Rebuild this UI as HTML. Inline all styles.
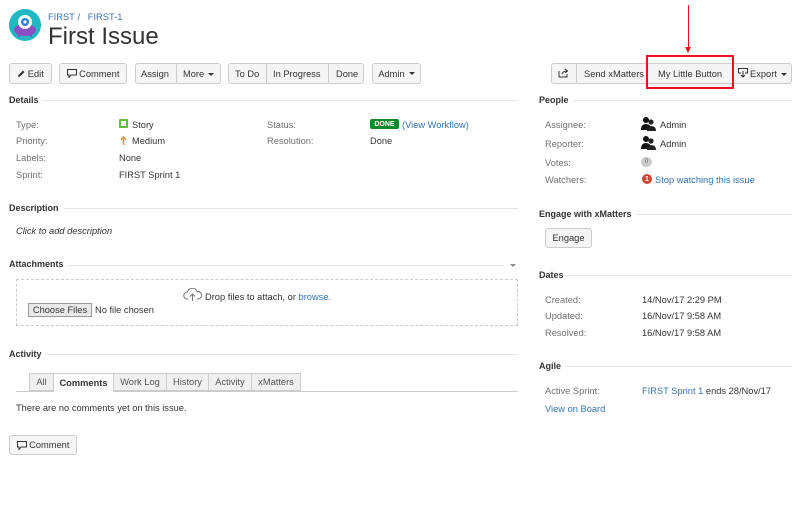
<!DOCTYPE html>
<html><head><meta charset="utf-8">
<style>
*{margin:0;padding:0;box-sizing:border-box}
body{width:800px;height:520px;background:#fff;font-family:"Liberation Sans",sans-serif;color:#333;position:relative;overflow:hidden;font-size:9.3px}
.t{position:absolute;white-space:nowrap;font-size:9.3px;line-height:12px;margin-top:1px}
.l{color:#707070}
.a{color:#3572b0}
.h{position:absolute;font-weight:bold;font-size:9px;line-height:12px;color:#333}
.rule{position:absolute;height:1px;background:#e6e6e6}
.btn{position:absolute;top:63px;height:21px;border:1px solid #ccc;background:#f5f5f5;border-radius:3px;font-size:9.3px;color:#333;display:flex;align-items:center;justify-content:center;white-space:nowrap}
.bt{top:67px}
.sep{position:absolute;top:64px;width:1px;height:19px;background:#ccc}
.car{display:inline-block;width:0;height:0;border-left:3px solid transparent;border-right:3px solid transparent;border-top:3px solid #333;vertical-align:middle;margin-left:4px}
.tab{position:absolute;top:373px;height:18px;border:1px solid #ccc;background:#f0f0f0;font-size:9.3px;display:flex;align-items:center;justify-content:center;color:#555}
</style></head><body>
<svg style="position:absolute;left:9px;top:9px" width="32" height="32" viewBox="0 0 32 32">
<circle cx="16" cy="16" r="16" fill="#1fb8c4"/>
<ellipse cx="16" cy="21" rx="11" ry="6" fill="#8a4fc0"/>
<rect x="9" y="25" width="2" height="3" fill="#8a4fc0"/><rect x="21" y="25" width="2" height="3" fill="#8a4fc0"/>
<circle cx="16" cy="13" r="7" fill="#fff"/><circle cx="16" cy="13" r="4" fill="#2d7fd0"/><circle cx="16" cy="13" r="1.6" fill="#fff"/>
</svg>
<div class="t a" style="left:48px;top:10px">FIRST&nbsp;/&nbsp;&nbsp; FIRST-1</div>
<div class="t" style="left:48px;top:22px;font-size:24px;line-height:28px">First Issue</div>

<div class="btn" style="left:9px;width:43px"><svg width="8" height="8" viewBox="0 0 8 8"><path d="M1 7 L1.5 5 L6 0.5 L7.5 2 L3 6.5Z" fill="#333"/></svg>&nbsp;Edit</div>
<div class="btn" style="left:59px;width:68px"><svg width="10" height="9" viewBox="0 0 10 9"><path d="M0.5 0.5H9.5V6H4L2 8.5V6H0.5Z" fill="none" stroke="#333"/></svg>&nbsp;Comment</div>
<div class="btn" style="left:135px;width:86px"></div><div class="t bt" style="left:141px">Assign</div><div class="sep" style="left:176px"></div><div class="t bt" style="left:183px">More<span class="car"></span></div>
<div class="btn" style="left:228px;width:136px"></div><div class="t bt" style="left:235px">To Do</div><div class="sep" style="left:266px"></div><div class="t bt" style="left:273px">In Progress</div><div class="sep" style="left:328px"></div><div class="t bt" style="left:336px">Done</div>
<div class="btn" style="left:372px;width:49px">Admin<span class="car"></span></div>

<div class="btn" style="left:551px;width:241px"></div>
<svg style="position:absolute;left:558px;top:68px" width="11" height="10" viewBox="0 0 11 10"><path d="M1 3V9H9V6" fill="none" stroke="#333"/><path d="M4 6 Q5 3 8.5 3 M7 1 L9.5 3 L7 5" fill="none" stroke="#333"/></svg>
<div class="sep" style="left:576px"></div><div class="t bt" style="left:584px">Send xMatters</div>
<div class="sep" style="left:647px"></div><div class="t bt" style="left:658px">My Little Button</div>
<div class="sep" style="left:732px"></div>
<svg style="position:absolute;left:738px;top:68px" width="10" height="10" viewBox="0 0 10 10"><path d="M3 5H0.5V0.5H9.5V5H7" fill="none" stroke="#333"/><path d="M5 3V9 M3 7L5 9L7 7" fill="none" stroke="#333"/></svg>
<div class="t bt" style="left:750px">Export<span class="car"></span></div>
<div style="position:absolute;left:646px;top:55px;width:88px;height:34px;border:2px solid #e8141c"></div>
<div style="position:absolute;left:688px;top:5px;width:1px;height:44px;background:#e8141c"></div>
<div style="position:absolute;left:685px;top:47px;width:0;height:0;border-left:3px solid transparent;border-right:3px solid transparent;border-top:6px solid #e8141c"></div>

<div class="h" style="left:9px;top:94px">Details</div><div class="rule" style="left:42px;top:100px;width:476px"></div>
<div class="t l" style="left:16px;top:118px">Type:</div>
<div style="position:absolute;left:119px;top:119px;width:9px;height:9px;background:#63ba3c;border-radius:1px"><div style="position:absolute;left:2px;top:2px;width:5px;height:5px;background:#fff"></div></div>
<div class="t" style="left:132px;top:118px">Story</div>
<div class="t l" style="left:16px;top:134px">Priority:</div>
<svg style="position:absolute;left:120px;top:136px" width="7" height="9" viewBox="0 0 7 9"><path d="M3.5 9V1 M0.8 3.8L3.5 1L6.2 3.8" fill="none" stroke="#f79232" stroke-width="1.6"/></svg>
<div class="t" style="left:132px;top:134px">Medium</div>
<div class="t l" style="left:16px;top:151px">Labels:</div><div class="t" style="left:119px;top:151px">None</div>
<div class="t l" style="left:16px;top:168px">Sprint:</div><div class="t" style="left:119px;top:168px">FIRST Sprint 1</div>
<div class="t l" style="left:267px;top:118px">Status:</div>
<div style="position:absolute;left:370px;top:119px;width:29px;height:10px;background:#14892c;border-radius:2px;color:#fff;font-size:7px;font-weight:bold;display:flex;align-items:center;justify-content:center">DONE</div>
<div class="t a" style="left:402px;top:118px">(View Workflow)</div>
<div class="t l" style="left:267px;top:134px">Resolution:</div><div class="t" style="left:370px;top:134px">Done</div>

<div class="h" style="left:9px;top:202px">Description</div><div class="rule" style="left:64px;top:208px;width:454px"></div>
<div class="t" style="left:16px;top:224px;font-style:italic">Click to add description</div>

<div class="h" style="left:9px;top:258px">Attachments</div><div class="rule" style="left:67px;top:265px;width:437px"></div>
<div style="position:absolute;left:510px;top:264px;border-left:3px solid transparent;border-right:3px solid transparent;border-top:3px solid #888"></div>
<div style="position:absolute;left:16px;top:279px;width:502px;height:47px;border:1px dashed #ccc"></div>
<svg style="position:absolute;left:183px;top:288px" width="20" height="14" viewBox="0 0 20 14"><path d="M5 11H4A3.5 3.5 0 0 1 4.5 4 5 5 0 0 1 14 3.5 3.7 3.7 0 0 1 15.5 11H14" fill="none" stroke="#777"/><path d="M9.5 13V6 M7 8.5L9.5 6L12 8.5" fill="none" stroke="#777"/></svg>
<div class="t" style="left:205px;top:290px">Drop files to attach, or <span class="a">browse.</span></div>
<div style="position:absolute;left:28px;top:303px;width:64px;height:14px;border:1px solid #999;background:#e9e9e9;font-size:9.3px;display:flex;align-items:center;justify-content:center">Choose Files</div>
<div class="t" style="left:95px;top:303px">No file chosen</div>

<div class="h" style="left:9px;top:348px">Activity</div><div class="rule" style="left:44px;top:354px;width:474px"></div>
<div class="rule" style="left:16px;top:391px;width:502px;background:#ccc"></div>
<div class="tab" style="left:29px;width:25px">All</div>
<div class="tab" style="left:53px;width:61px;background:#fff;border-bottom-color:#fff;color:#333;font-weight:bold;height:19px">Comments</div>
<div class="tab" style="left:113px;width:54px">Work Log</div>
<div class="tab" style="left:166px;width:43px">History</div>
<div class="tab" style="left:208px;width:44px">Activity</div>
<div class="tab" style="left:251px;width:50px">xMatters</div>
<div class="t" style="left:16px;top:401px">There are no comments yet on this issue.</div>
<div style="position:absolute;left:9px;top:435px;width:68px;height:20px;border:1px solid #ccc;background:#f5f5f5;border-radius:3px;font-size:9.3px;display:flex;align-items:center;justify-content:center"><svg width="10" height="9" viewBox="0 0 10 9"><path d="M0.5 0.5H9.5V6H4L2 8.5V6H0.5Z" fill="none" stroke="#333"/></svg>&nbsp;Comment</div>

<div class="h" style="left:539px;top:94px">People</div><div class="rule" style="left:573px;top:100px;width:219px"></div>
<div class="t l" style="left:545px;top:118px">Assignee:</div>
<svg style="position:absolute;left:641px;top:116px" width="16" height="15" viewBox="0 0 16 15"><circle cx="5" cy="4" r="3" fill="#111"/><path d="M0 14Q0 8 5 8Q10 8 10 14Z" fill="#111"/><circle cx="10" cy="6" r="2.6" fill="#222"/><path d="M6 15Q6 10 10 10Q15 10 15 15Z" fill="#222"/></svg>
<div class="t" style="left:660px;top:118px">Admin</div>
<div class="t l" style="left:545px;top:137px">Reporter:</div>
<svg style="position:absolute;left:641px;top:135px" width="16" height="15" viewBox="0 0 16 15"><circle cx="5" cy="4" r="3" fill="#111"/><path d="M0 14Q0 8 5 8Q10 8 10 14Z" fill="#111"/><circle cx="10" cy="6" r="2.6" fill="#222"/><path d="M6 15Q6 10 10 10Q15 10 15 15Z" fill="#222"/></svg>
<div class="t" style="left:660px;top:137px">Admin</div>
<div class="t l" style="left:545px;top:156px">Votes:</div>
<div style="position:absolute;left:641px;top:157px;width:11px;height:10px;border-radius:5px;background:#ccc;color:#666;font-size:6px;display:flex;align-items:center;justify-content:center">0</div>
<div class="t l" style="left:545px;top:173px">Watchers:</div>
<div style="position:absolute;left:642px;top:174px;width:10px;height:10px;border-radius:5px;background:#d04437;color:#fff;font-size:7px;font-weight:bold;display:flex;align-items:center;justify-content:center">1</div>
<div class="t a" style="left:655px;top:173px">Stop watching this issue</div>

<div class="h" style="left:539px;top:208px">Engage with xMatters</div><div class="rule" style="left:636px;top:214px;width:156px"></div>
<div style="position:absolute;left:545px;top:228px;width:47px;height:20px;border:1px solid #ccc;background:#f5f5f5;border-radius:3px;font-size:9.3px;display:flex;align-items:center;justify-content:center">Engage</div>

<div class="h" style="left:539px;top:269px">Dates</div><div class="rule" style="left:567px;top:275px;width:225px"></div>
<div class="t l" style="left:545px;top:293px">Created:</div><div class="t" style="left:642px;top:293px">14/Nov/17 2:29 PM</div>
<div class="t l" style="left:545px;top:309px">Updated:</div><div class="t" style="left:642px;top:309px">16/Nov/17 9:58 AM</div>
<div class="t l" style="left:545px;top:326px">Resolved:</div><div class="t" style="left:642px;top:326px">16/Nov/17 9:58 AM</div>

<div class="h" style="left:539px;top:360px">Agile</div><div class="rule" style="left:564px;top:366px;width:228px"></div>
<div class="t l" style="left:545px;top:384px">Active Sprint:</div><div class="t" style="left:642px;top:384px"><span class="a">FIRST Sprint 1</span> ends 28/Nov/17</div>
<div class="t a" style="left:545px;top:402px">View on Board</div>
</body></html>
